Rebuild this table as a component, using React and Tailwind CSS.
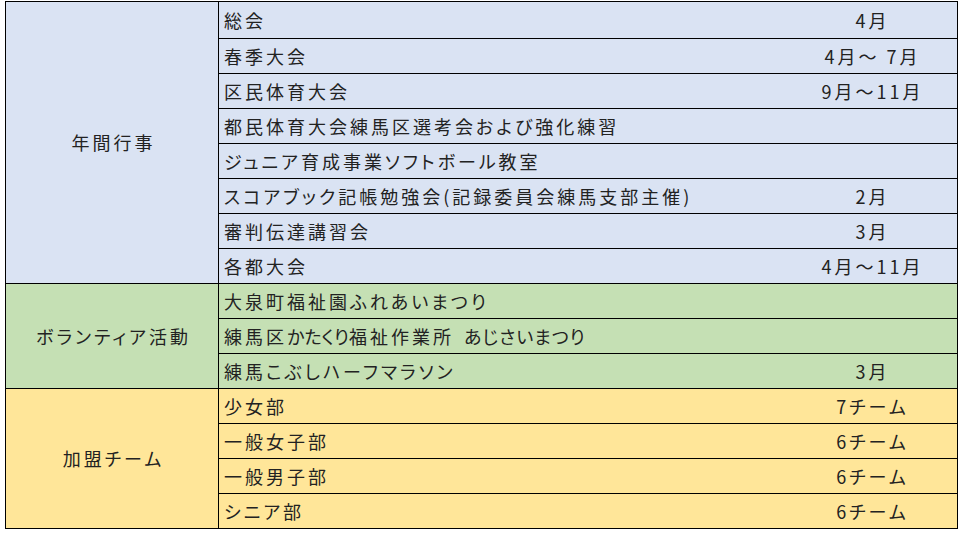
const groups = [
  {
    label: '年間行事',
    bg: 'bg-[#dae3f3]',
    rows: [
      ['総会', '4月'],
      ['春季大会', '4月〜 7月'],
      ['区民体育大会', '9月〜11月'],
      ['都民体育大会練馬区選考会および強化練習', ''],
      ['ジュニア育成事業ソフトボール教室', ''],
      ['スコアブック記帳勉強会(記録委員会練馬支部主催)', '2月'],
      ['審判伝達講習会', '3月'],
      ['各都大会', '4月〜11月'],
    ],
  },
  {
    label: 'ボランティア活動',
    bg: 'bg-[#c5e0b4]',
    rows: [
      ['大泉町福祉園ふれあいまつり', ''],
      [
        <>
          練馬区<span className="tracking-[0px]">かたくり</span>福祉作業所
          <span className="inline-block w-[10px]" />
          <span className="tracking-[1px]">あじさいまつり</span>
        </>,
        '',
      ],
      ['練馬こぶしハーフマラソン', '3月'],
    ],
  },
  {
    label: '加盟チーム',
    bg: 'bg-[#ffe699]',
    rows: [
      ['少女部', '7チーム'],
      ['一般女子部', '6チーム'],
      ['一般男子部', '6チーム'],
      ['シニア部', '6チーム'],
    ],
  },
];

// first row of the first group sits right under the outer border, later groups under a divider
function rowClass(gi, ri) {
  if (ri > 0) return 'h-[35px] border-t border-black';
  return gi === 0 ? 'h-[36px]' : 'h-[34px]';
}

export default function App() {
  return (
    <div className="w-[962px] h-[535px] bg-white pt-[1px] pl-[5px] font-['Noto_Sans_CJK_JP',sans-serif] text-[#222] [font-feature-settings:'palt']">
      <div className="w-[953px] border border-black">
        {groups.map((group, gi) => (
          <div
            key={group.label}
            className={`flex ${group.bg} ${gi > 0 ? 'border-t border-black' : ''}`}
          >
            {/* group label */}
            <div className="w-[213px] shrink-0 border-r border-black flex items-center justify-center text-[18px] tracking-[3px] pl-[3px]">
              {group.label}
            </div>
            <div className="flex-1">
              {group.rows.map(([name, value], ri) => (
                <div key={ri} className={`flex items-center ${rowClass(gi, ri)}`}>
                  <span className="flex-1 pl-[5px] text-[18px] tracking-[3px] whitespace-pre">{name}</span>
                  <span className="w-[172px] text-center text-[18px] tracking-[3px] pl-[3px] whitespace-pre">{value}</span>
                </div>
              ))}
            </div>
          </div>
        ))}
      </div>
    </div>
  );
}
